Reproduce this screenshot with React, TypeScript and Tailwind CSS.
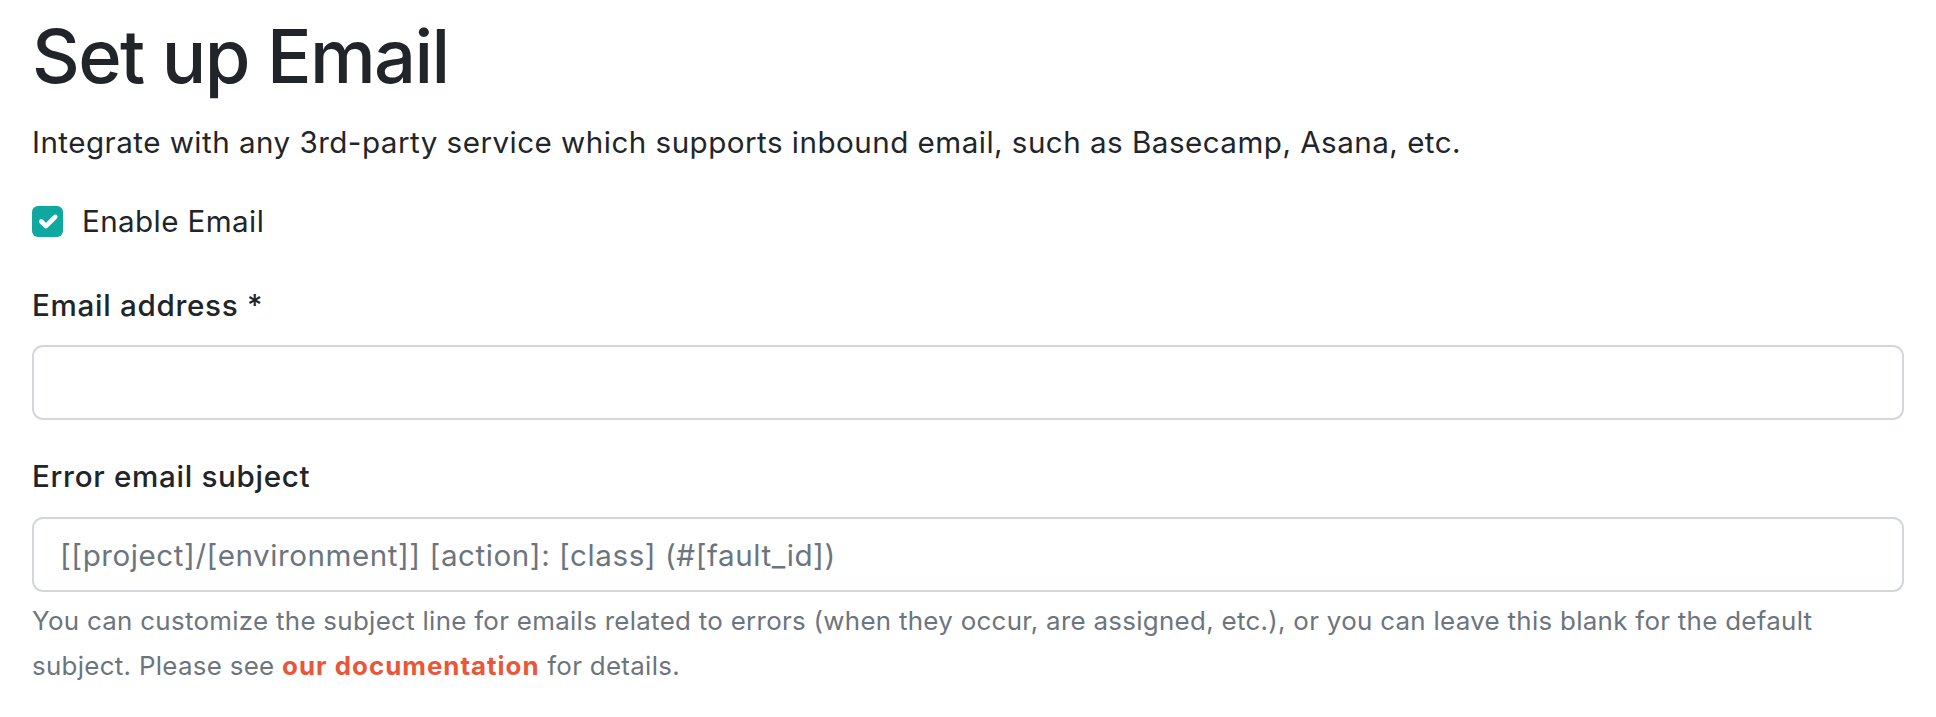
import React from "react";

function CheckBox() {
  return (
    <span className="flex h-[31px] w-[31px] shrink-0 items-center justify-center rounded-[6px] bg-[#0fa8a0]">
      <svg viewBox="0 0 20 20" className="h-[31px] w-[31px]" fill="none">
        <path d="m6 10 3 3 6-6" stroke="#fff" strokeWidth="3" strokeLinecap="round" strokeLinejoin="round" />
      </svg>
    </span>
  );
}

export default function App() {
  return (
    <div className="min-h-[717px] bg-white px-[32px] pt-[12px] text-[#212529] [font-family:Inter,'Noto_Sans',sans-serif]">
      <h1 className="text-[74px] font-medium leading-[1.2] tracking-[-1.6px]">Set up Email</h1>
      <p className="mt-[19px] text-[29.6px] leading-[44.4px] tracking-[0.47px]">
        Integrate with any 3rd-party service which supports inbound email, such as Basecamp, Asana, etc.
      </p>

      <label className="mt-[35px] flex items-center gap-[19px] text-[29.6px] leading-[44.4px] tracking-[0.4px]">
        <CheckBox />
        <span>Enable Email</span>
      </label>

      <div className="mt-[39px]">
        <div className="text-[29.6px] font-medium leading-[44.4px] tracking-[0.7px]">Email address *</div>
        <input
          type="text"
          className="mt-[18px] block h-[75px] w-full rounded-[11px] border-2 border-[#d3d7dc] bg-white px-[26px] text-[29.6px] outline-none"
        />
      </div>

      <div className="mt-[34px]">
        <div className="text-[29.6px] font-medium leading-[44.4px] tracking-[0.7px]">Error email subject</div>
        <input
          type="text"
          placeholder="[[project]/[environment]] [action]: [class] (#[fault_id])"
          className="mt-[19px] block h-[75px] w-full rounded-[11px] border-2 border-[#d3d7dc] bg-white px-[26px] text-[29.6px] tracking-[0.55px] outline-none placeholder:text-[#6c757d]"
        />
        <p className="mt-[6px] text-[25.9px] leading-[45px] tracking-[0.3px] text-[#6c757d]">
          You can customize the subject line for emails related to errors (when they occur, are assigned, etc.), or you can leave this blank for the default subject. Please see{" "}
          <a href="#" className="font-bold tracking-[1px] text-[#e9573a]">
            our documentation
          </a>{" "}
          for details.
        </p>
      </div>
    </div>
  );
}
